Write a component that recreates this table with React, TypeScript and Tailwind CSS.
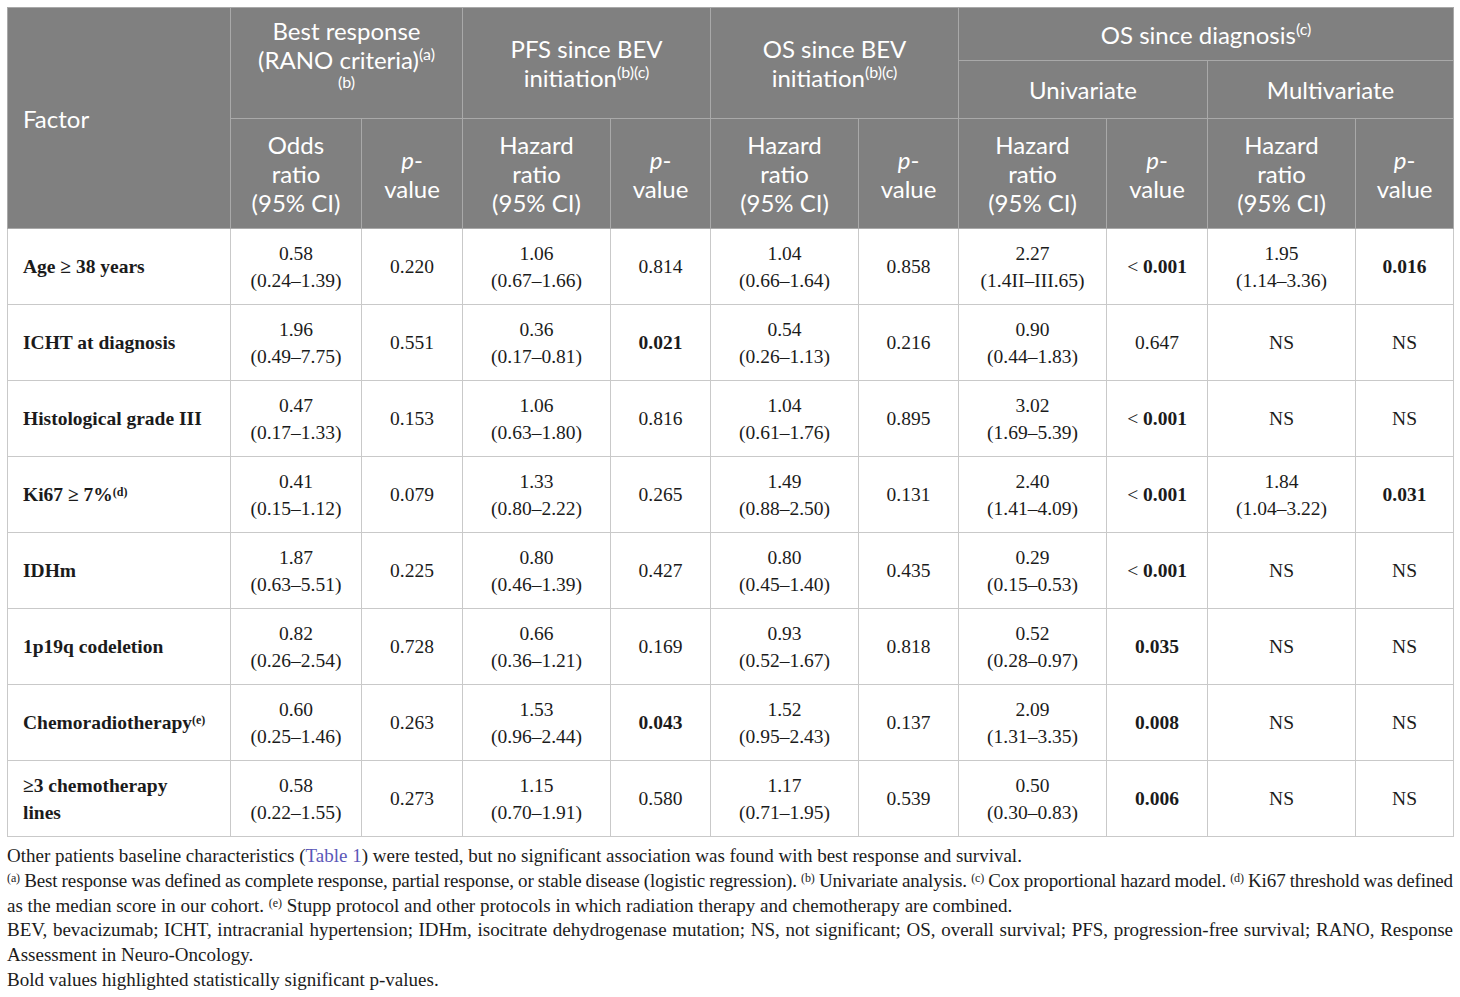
import { Fragment } from "react";
import type { ReactNode } from "react";

type Row = {
  factor: ReactNode;
  cells: [string, string][];
  p: ReactNode[];
};

const B = ({ children }: { children: ReactNode }) => <b className="font-bold">{children}</b>;
const Lt = ({ v }: { v: string }) => (
  <>
    &lt; <B>{v}</B>
  </>
);

const fsup = "relative -top-[5px] text-[12px] leading-none";

const rows: Row[] = [
  {
    factor: <>Age ≥ 38 years</>,
    cells: [["0.58", "(0.24–1.39)"], ["1.06", "(0.67–1.66)"], ["1.04", "(0.66–1.64)"], ["2.27", "(1.4II–III.65)"], ["1.95", "(1.14–3.36)"]],
    p: ["0.220", "0.814", "0.858", <Lt v="0.001" />, <B>0.016</B>],
  },
  {
    factor: <>ICHT at diagnosis</>,
    cells: [["1.96", "(0.49–7.75)"], ["0.36", "(0.17–0.81)"], ["0.54", "(0.26–1.13)"], ["0.90", "(0.44–1.83)"], ["NS", ""]],
    p: ["0.551", <B>0.021</B>, "0.216", "0.647", "NS"],
  },
  {
    factor: <>Histological grade III</>,
    cells: [["0.47", "(0.17–1.33)"], ["1.06", "(0.63–1.80)"], ["1.04", "(0.61–1.76)"], ["3.02", "(1.69–5.39)"], ["NS", ""]],
    p: ["0.153", "0.816", "0.895", <Lt v="0.001" />, "NS"],
  },
  {
    factor: (
      <>
        Ki67 ≥ 7%<span className={fsup}>(d)</span>
      </>
    ),
    cells: [["0.41", "(0.15–1.12)"], ["1.33", "(0.80–2.22)"], ["1.49", "(0.88–2.50)"], ["2.40", "(1.41–4.09)"], ["1.84", "(1.04–3.22)"]],
    p: ["0.079", "0.265", "0.131", <Lt v="0.001" />, <B>0.031</B>],
  },
  {
    factor: <>IDHm</>,
    cells: [["1.87", "(0.63–5.51)"], ["0.80", "(0.46–1.39)"], ["0.80", "(0.45–1.40)"], ["0.29", "(0.15–0.53)"], ["NS", ""]],
    p: ["0.225", "0.427", "0.435", <Lt v="0.001" />, "NS"],
  },
  {
    factor: <>1p19q codeletion</>,
    cells: [["0.82", "(0.26–2.54)"], ["0.66", "(0.36–1.21)"], ["0.93", "(0.52–1.67)"], ["0.52", "(0.28–0.97)"], ["NS", ""]],
    p: ["0.728", "0.169", "0.818", <B>0.035</B>, "NS"],
  },
  {
    factor: (
      <>
        Chemoradiotherapy<span className={fsup}>(e)</span>
      </>
    ),
    cells: [["0.60", "(0.25–1.46)"], ["1.53", "(0.96–2.44)"], ["1.52", "(0.95–2.43)"], ["2.09", "(1.31–3.35)"], ["NS", ""]],
    p: ["0.263", <B>0.043</B>, "0.137", <B>0.008</B>, "NS"],
  },
  {
    factor: (
      <>
        ≥3 chemotherapy
        <br />
        lines
      </>
    ),
    cells: [["0.58", "(0.22–1.55)"], ["1.15", "(0.70–1.91)"], ["1.17", "(0.71–1.95)"], ["0.50", "(0.30–0.83)"], ["NS", ""]],
    p: ["0.273", "0.580", "0.539", <B>0.006</B>, "NS"],
  },
];

const widths = [223, 131, 101, 148, 100, 148, 100, 148, 101, 148, 98];

const hd = "border border-[#a9a9a9] bg-[#808080] text-white text-center align-middle font-normal";
const bd = "border border-[#c9c9c9] text-center align-middle";
const sup = "relative -top-[9px] text-[16px] leading-none";

function PHead() {
  return (
    <th className={hd}>
      <i>p</i>-<br />
      value
    </th>
  );
}

function RatioHead({ first }: { first: string }) {
  return (
    <th className={hd}>
      {first}
      <br />
      ratio
      <br />
      (95% CI)
    </th>
  );
}

export default function App() {
  return (
    <div className="min-h-[997px] w-[1460px] bg-white p-[7px] text-[#1b1b1b]">
      <table className="table-fixed border-collapse" style={{ width: 1446 }}>
        <colgroup>
          {widths.map((w, i) => (
            <col key={i} style={{ width: w }} />
          ))}
        </colgroup>
        <thead className="font-['Lato','Open_Sans',sans-serif] text-[24px] leading-[29px]">
          <tr className="h-[53px]">
            <th rowSpan={3} className={`${hd} pl-[15px] text-left`}>
              Factor
            </th>
            <th rowSpan={2} colSpan={2} className={`${hd} pb-[20px]`}>
              Best response
              <br />
              (RANO criteria)<span className={sup}>(a)</span>
              <div className="text-[16px] leading-[16px]">(b)</div>
            </th>
            <th rowSpan={2} colSpan={2} className={hd}>
              PFS since BEV
              <br />
              initiation<span className={sup}>(b)(c)</span>
            </th>
            <th rowSpan={2} colSpan={2} className={hd}>
              OS since BEV
              <br />
              initiation<span className={sup}>(b)(c)</span>
            </th>
            <th colSpan={4} className={hd}>
              OS since diagnosis<span className={sup}>(c)</span>
            </th>
          </tr>
          <tr className="h-[58px]">
            <th colSpan={2} className={hd}>
              Univariate
            </th>
            <th colSpan={2} className={hd}>
              Multivariate
            </th>
          </tr>
          <tr className="h-[110px]">
            <RatioHead first="Odds" />
            <PHead />
            <RatioHead first="Hazard" />
            <PHead />
            <RatioHead first="Hazard" />
            <PHead />
            <RatioHead first="Hazard" />
            <PHead />
            <RatioHead first="Hazard" />
            <PHead />
          </tr>
        </thead>
        <tbody className="font-['Liberation_Serif',serif] text-[19.5px] leading-[27px]">
          {rows.map((r, i) => (
            <tr key={i} className="h-[76px]">
              <td className={`${bd} pl-[15px] text-left font-bold`}>{r.factor}</td>
              {r.cells.map((c, j) => (
                <Fragment key={j}>
                  <td className={bd}>
                    {c[0]}
                    {c[1] && (
                      <>
                        <br />
                        {c[1]}
                      </>
                    )}
                  </td>
                  <td className={bd}>{r.p[j]}</td>
                </Fragment>
              ))}
            </tr>
          ))}
        </tbody>
      </table>
      <div className="mt-[7px] w-[1446px] text-justify font-['Liberation_Serif',serif] text-[19px] leading-[24.8px]">
        <p>
          Other patients baseline characteristics (<span className="text-[#5b57b8]">Table 1</span>) were tested, but
          no significant association was found with best response and survival.
        </p>
        <p className="whitespace-nowrap tracking-[-0.12px] [text-align-last:justify] [word-spacing:-1.5px]">
          <span className={fsup}>(a)</span> Best response was defined as complete response, partial response, or
          stable disease (logistic regression). <span className={fsup}>(b)</span> Univariate analysis.{" "}
          <span className={fsup}>(c)</span> Cox proportional hazard model. <span className={fsup}>(d)</span> Ki67
          threshold was defined
        </p>
        <p>
          as the median score in our cohort. <span className={fsup}>(e)</span> Stupp protocol and other protocols in
          which radiation therapy and chemotherapy are combined.
        </p>
        <p>
          BEV, bevacizumab; ICHT, intracranial hypertension; IDHm, isocitrate dehydrogenase mutation; NS, not
          significant; OS, overall survival; PFS, progression-free survival; RANO, Response Assessment in
          Neuro-Oncology.
        </p>
        <p>Bold values highlighted statistically significant p-values.</p>
      </div>
    </div>
  );
}
